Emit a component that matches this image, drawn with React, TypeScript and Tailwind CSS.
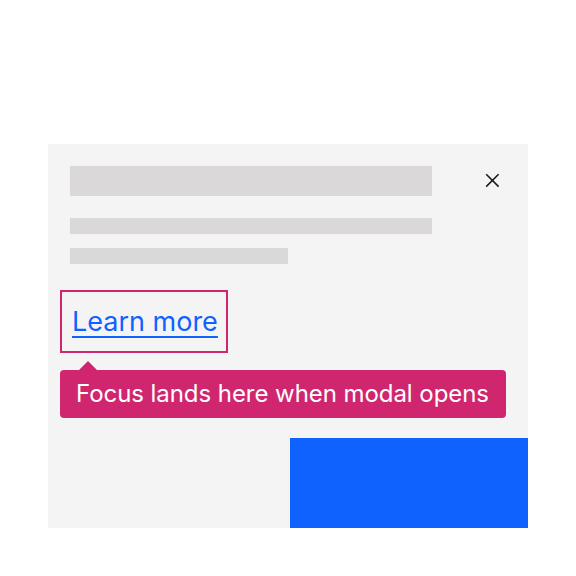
export default function App() {
  return (
    <div className="min-h-screen bg-white pt-[144px] pl-[48px]" style={{ fontFamily: "Inter, 'Noto Sans', sans-serif" }}>
      <div className="w-[480px] h-[384px] bg-[#f4f4f4] flex flex-col">
        {/* header skeleton + close */}
        <div className="flex items-start pt-[22px] pl-[22px]">
          <div className="w-[362px] h-[30px] bg-[#dad8d8]" />
          <button className="ml-[52px] mt-[6px] w-[16px] h-[16px] flex items-center justify-center">
            <svg width="16" height="16" viewBox="0 0 16 16">
              <path d="M2.2 2.2 L14.6 14.6 M14.6 2.2 L2.2 14.6" stroke="#161616" strokeWidth="1.5" />
            </svg>
          </button>
        </div>

        {/* body skeleton lines */}
        <div className="pl-[22px] mt-[22px] flex flex-col gap-[14px]">
          <div className="w-[362px] h-[16px] bg-[#dad8d8]" />
          <div className="w-[218px] h-[16px] bg-[#dad8d8]" />
        </div>

        {/* focused link */}
        <div className="pl-[12px] mt-[26px]">
          <a href="#" className="inline-flex items-center h-[63px] pl-[10px] pr-[8px] border-2 border-[#d02670] text-[27px] leading-none text-[#0f62fe] underline underline-offset-[5px] decoration-[2px]">
            Learn more
          </a>
        </div>

        {/* tooltip */}
        <div className="pl-[12px] mt-[17px]">
          <div className="relative inline-flex items-center h-[48px] pl-[16px] pr-[17px] rounded-[4px] bg-[#d02670] text-white text-[24px] leading-none tracking-[-0.06px]">
            <span className="absolute left-[18px] -top-[9px] w-0 h-0 border-l-[10px] border-r-[10px] border-b-[10px] border-l-transparent border-r-transparent border-b-[#d02670]" />
            Focus lands here when modal opens
          </div>
        </div>

        {/* primary action */}
        <div className="mt-auto self-end w-[238px] h-[90px] bg-[#0f62fe]" />
      </div>
    </div>
  );
}
